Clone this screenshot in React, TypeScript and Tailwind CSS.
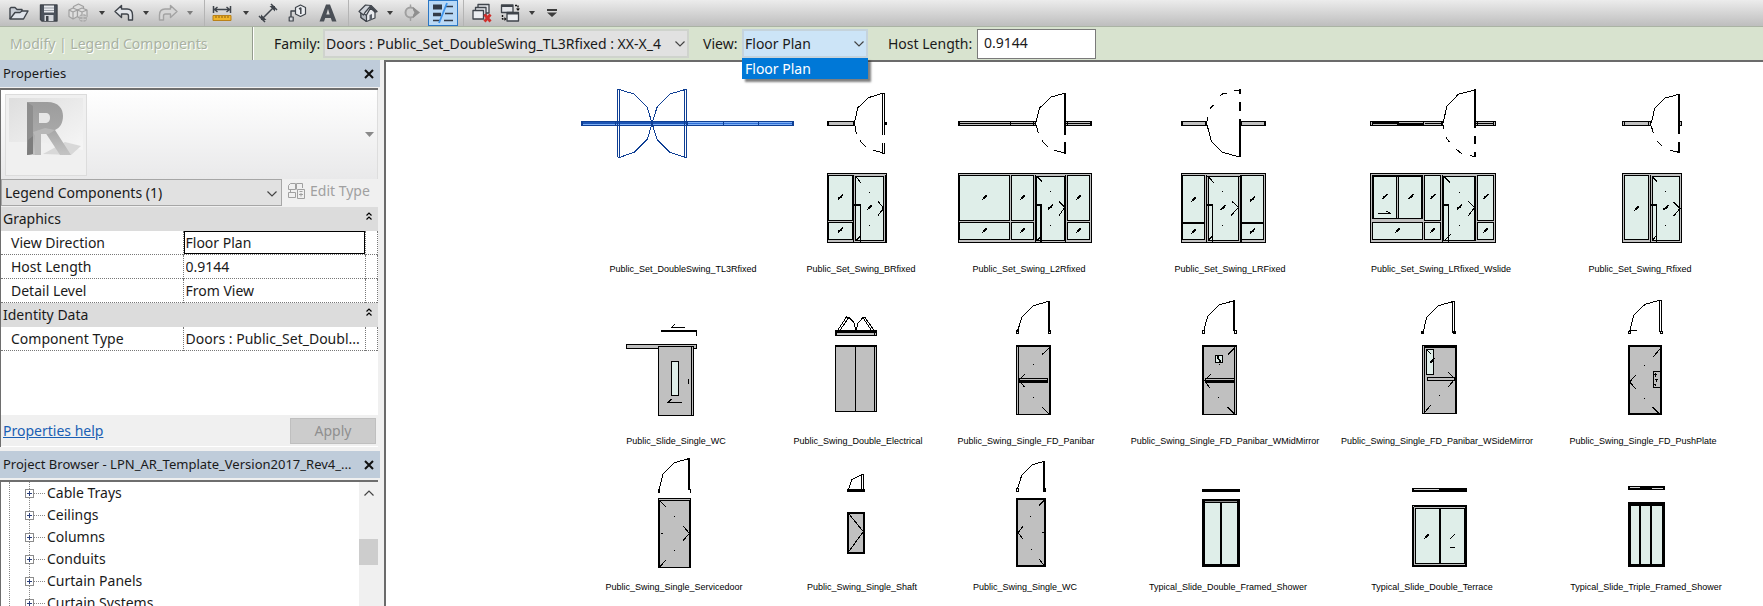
import type { ReactNode } from "react";

const GRAY = "#c0c0c0";
const GLASS = "#dfeee9";

/* ---------- drawing primitives (units are thirds of a pixel) ---------- */

function R({ b, f = "none", w = 3, s = "#000" }: { b: [number, number, number, number]; f?: string; w?: number; s?: string }) {
  const [x1, y1, x2, y2] = b;
  return <rect x={x1 + w / 2} y={y1 + w / 2} width={Math.max(x2 - x1 - w, 0.1)} height={Math.max(y2 - y1 - w, 0.1)} fill={f} stroke={s} strokeWidth={w} />;
}

function P({ d, w = 3, s = "#000" }: { d: string; w?: number; s?: string }) {
  return <path d={d} fill="none" stroke={s} strokeWidth={w} />;
}

function Tick({ x, y }: { x: number; y: number }) {
  return (
    <>
      <P d={`M${x - 7} ${y + 7}L${x + 8} ${y - 8}`} />
      <P d={`M${x - 5} ${y + 4}L${x + 5} ${y - 4}`} w={6} />
    </>
  );
}

function Dots({ x, ys }: { x: number; ys: number[] }) {
  return <>{ys.map((y) => <rect key={y} x={x - 1} y={y - 1} width={3} height={3} />)}</>;
}

/* ---------- legend figures ---------- */

interface FigureSpec {
  name: string;
  cx: number;
  w: number;
  origin: [number, number];
  row: 0 | 1 | 2;
  art: ReactNode;
}

const ROWS = [
  { top: 80, height: 180 },
  { top: 290, height: 142 },
  { top: 454, height: 124 },
];
const SHEET_LEFT = 386;
const SHEET_TOP = 62;
const BLUE = "#0f3f94";

const figures: FigureSpec[] = [
  {
    name: "Public_Set_DoubleSwing_TL3Rfixed", cx: 683, w: 230, origin: [560, 70], row: 0,
    art: (
      <>
        <R b={[64, 153, 701, 167]} f="#7fb0f5" s={BLUE} />
        <P d="M64 160H380" s="#1c55b5" w={6} />
        <P d="M380 160H700" s="#2f6fd6" />
        <R b={[64, 153, 70, 167]} f={BLUE} s={BLUE} />
        <P d="M167 153V167M383 153V167M489 153V167M595 153V167M697 153V167" s={BLUE} />
        <P d="M173 58V262M179 58V262M173 59H180M173 262H180M374 58V262M380 58V262M374 59H381M374 262H381" s={BLUE} />
        <P d="M179 59L222 72L262 112L276 160L262 208L222 247L179 262" s={BLUE} />
        <P d="M374 59L330 72L291 112L276 160L291 208L330 247L374 262" s={BLUE} />
        <P d="M276 150V170" s={BLUE} w={6} />
      </>
    ),
  },
  {
    name: "Public_Set_Swing_BRfixed", cx: 861, w: 140, origin: [560, 70], row: 0,
    art: (
      <>
        <R b={[802, 153, 885, 167]} f={GRAY} />
        <P d="M804 153V167M881 153V167" w={5} />
        <P d="M883 160L893 114L925 83L968 70M885 168L889 192M900 212L917 230M940 241L968 248" />
        <P d="M968 70V194M973 70V194M967 71H975M968 219V250M973 219V250M967 249H975" />
        <R b={[974, 155, 980, 165]} />
        <R b={[801, 309, 981, 519]} f={GRAY} />
        <R b={[804, 315, 880, 452]} f={GLASS} />
        <R b={[804, 456, 880, 510]} f={GLASS} />
        <R b={[885, 317, 971, 513]} f={GLASS} />
        <P d="M881 315V517" w={4} />
        <P d="M975 315V515M885 319H971" />
        <P d="M882 405H901V516" w={4} />
        <Tick x={841} y={382} /><Tick x={841} y={481} /><Tick x={929} y={412} />
        <Dots x={928} ys={[367, 466]} />
        <P d="M954 394L971 414L954 437M889 321L902 338M888 512L901 498" />
        <rect x={967} y={410} width={6} height={12} />
      </>
    ),
  },
  {
    name: "Public_Set_Swing_L2Rfixed", cx: 1029, w: 150, origin: [920, 70], row: 0,
    art: (
      <>
        <R b={[114, 153, 348, 167]} f={GRAY} />
        <P d="M117 160H345M272 153V167M341 153V167" />
        <P d="M117 153V167" w={6} />
        <R b={[436, 153, 516, 167]} f={GRAY} />
        <P d="M438 160H512M442 153V167M510 153V167" />
        <P d="M347 160L358 115L393 81L434 70M349 166L355 190M366 212L383 230M403 241L434 249" />
        <P d="M435 69V194M435 217V251" w={5} />
        <R b={[114, 309, 516, 519]} f={GRAY} />
        <R b={[117, 315, 270, 452]} f={GLASS} />
        <R b={[117, 456, 270, 510]} f={GLASS} />
        <R b={[273, 315, 342, 452]} f={GLASS} />
        <R b={[273, 456, 342, 510]} f={GLASS} />
        <R b={[441, 315, 510, 452]} f={GLASS} />
        <R b={[441, 456, 510, 510]} f={GLASS} />
        <R b={[349, 317, 434, 513]} f={GLASS} />
        <P d="M346 315V517M437 315V517M346 319H437" />
        <P d="M347 405H363V516" w={4} />
        <Tick x={194} y={382} /><Tick x={308} y={382} /><Tick x={476} y={382} />
        <Tick x={194} y={481} /><Tick x={308} y={481} /><Tick x={476} y={481} /><Tick x={391} y={412} />
        <Dots x={391} ys={[364, 466]} />
        <P d="M417 394L434 412L417 437M353 321L366 335M353 510L364 498" />
      </>
    ),
  },
  {
    name: "Public_Set_Swing_LRFixed", cx: 1230, w: 130, origin: [920, 70], row: 0,
    art: (
      <>
        <R b={[783, 153, 861, 167]} f={GRAY} />
        <P d="M785 153V167" w={5} /><P d="M855 153V167" />
        <R b={[961, 153, 1038, 167]} f={GRAY} />
        <P d="M965 153V167M1033 153V167" />
        <P d="M860 160L874 214L907 247L960 261M861 152L864 142M870 116L881 104M900 78L909 71H921M942 62L960 60" />
        <P d="M960 58V71M960 96V122M960 148V262" w={5} />
        <R b={[783, 309, 1038, 519]} f={GRAY} />
        <R b={[786, 315, 855, 459]} f={GLASS} />
        <R b={[786, 459, 855, 510]} f={GLASS} />
        <R b={[964, 315, 1032, 459]} f={GLASS} />
        <R b={[964, 459, 1032, 510]} f={GLASS} />
        <R b={[864, 317, 958, 513]} f={GLASS} />
        <P d="M859 315V517M963 315V517M859 319H963M786 459H855M964 459H1032" w={4} />
        <P d="M860 405H877V516" w={4} />
        <Tick x={821} y={388} /><Tick x={997} y={388} /><Tick x={821} y={484} /><Tick x={997} y={484} /><Tick x={909} y={413} />
        <Dots x={908} ys={[364, 466]} />
        <P d="M936 394L955 412L933 437M866 321L881 338M866 510L880 494" />
      </>
    ),
  },
  {
    name: "Public_Set_Swing_LRfixed_Wslide", cx: 1441, w: 150, origin: [1320, 70], row: 0,
    art: (
      <>
        <R b={[150, 153, 369, 167]} f={GRAY} />
        <P d="M156 158H236M232 163H310" w={6} />
        <P d="M157 153V167M310 153V167M314 160H365M363 153V167" />
        <R b={[466, 153, 528, 167]} f={GRAY} />
        <P d="M468 160H522M473 153V167M521 153V167" />
        <P d="M369 160L381 108L416 72L465 60M369 166L371 176M378 202L388 216M408 237L425 251M450 257L465 260" />
        <P d="M465 57V173M465 198V222M465 246V262" w={6} />
        <R b={[150, 309, 528, 519]} f={GRAY} />
        <R b={[157, 315, 308, 448]} f={GLASS} w={5} />
        <R b={[228, 318, 236, 447]} f={GRAY} />
        <R b={[157, 456, 309, 510]} f={GLASS} />
        <R b={[312, 315, 363, 452]} f={GLASS} />
        <R b={[312, 456, 363, 510]} f={GLASS} />
        <R b={[471, 315, 521, 452]} f={GLASS} />
        <R b={[471, 456, 521, 510]} f={GLASS} />
        <R b={[369, 317, 467, 514]} f={GLASS} w={4} />
        <P d="M368 315V517" w={4} />
        <P d="M371 405H385V516" w={4} />
        <Tick x={194} y={380} /><Tick x={273} y={380} /><Tick x={338} y={380} /><Tick x={497} y={380} />
        <Tick x={233} y={481} /><Tick x={338} y={481} /><Tick x={497} y={481} /><Tick x={418} y={412} />
        <Dots x={418} ys={[367, 466]} />
        <P d="M445 394L464 412L444 438M374 321L390 338M374 512L392 492M174 430H210L198 423" />
      </>
    ),
  },
  {
    name: "Public_Set_Swing_Rfixed", cx: 1640, w: 130, origin: [1320, 70], row: 0,
    art: (
      <>
        <R b={[906, 153, 994, 167]} f={GRAY} />
        <P d="M912 153V167M986 153V167" />
        <R b={[1078, 153, 1086, 167]} f={GRAY} />
        <P d="M994 160L1004 115L1035 84L1077 73M994 168L1000 190M1011 213L1025 227M1050 241L1077 247" />
        <P d="M1077 73V191M1077 215V249" w={6} />
        <R b={[906, 309, 1086, 519]} f={GRAY} />
        <R b={[912, 315, 988, 510]} f={GLASS} />
        <R b={[996, 317, 1080, 513]} f={GLASS} w={4} />
        <P d="M992 315V517" w={4} />
        <P d="M994 405H1009V516" />
        <P d="M994 405H1010" w={4} />
        <Tick x={950} y={415} /><Tick x={1037} y={414} />
        <Dots x={1036} ys={[365, 466]} />
        <P d="M1061 396L1080 415L1061 438M998 321L1011 335M998 510L1008 498M1080 415H1085" />
      </>
    ),
  },
  {
    name: "Public_Slide_Single_WC", cx: 676, w: 110, origin: [580, 285], row: 1,
    art: (
      <>
        <P d="M285 117L274 128H315" />
        <P d="M243 137H349V152" w={5} />
        <R b={[138, 177, 351, 191]} f={GRAY} />
        <R b={[234, 183, 342, 393]} f={GRAY} />
        <P d="M334 185V391M326 282V297" />
        <R b={[273, 228, 297, 333]} f={GLASS} />
        <P d="M275 342L265 352H306" />
      </>
    ),
  },
  {
    name: "Public_Swing_Double_Electrical", cx: 858, w: 80, origin: [580, 285], row: 1,
    art: (
      <>
        <P d="M773 136L800 95L806 98L779 137M806 97L822 113L828 136L834 115L850 96M847 95L875 137M853 95L883 137" />
        <R b={[765, 138, 891, 153]} f={GRAY} />
        <P d="M765 139H890" w={7} /><P d="M768 136V153M884 138V152" w={4} />
        <R b={[765, 180, 891, 381]} f={GRAY} w={4} />
        <P d="M827 184V378M884 184V378M768 184H888M766 378H889" />
      </>
    ),
  },
  {
    name: "Public_Swing_Single_FD_Panibar", cx: 1026, w: 80, origin: [580, 285], row: 1,
    art: (
      <>
        <P d="M1312 140L1326 97L1360 62L1406 49" />
        <P d="M1407 48V140" w={6} />
        <R b={[1308, 136, 1317, 147]} /><R b={[1404, 136, 1413, 147]} />
        <R b={[1308, 180, 1413, 390]} f={GRAY} />
        <P d="M1315 184V388" /><P d="M1410 181V388M1312 183H1412" w={5} />
        <R b={[1316, 279, 1404, 292]} f={GRAY} /><P d="M1317 289H1404" w={7} />
        <P d="M1334 267L1317 286L1334 307M1386 209L1406 190M1386 366L1408 388" />
        <Dots x={1360} ys={[238, 337]} />
      </>
    ),
  },
  {
    name: "Public_Swing_Single_FD_Panibar_WMidMirror", cx: 1225, w: 80, origin: [1060, 285], row: 1,
    art: (
      <>
        <P d="M431 138L443 94L478 59L520 48" />
        <P d="M522 45V138" w={5} />
        <R b={[426, 135, 435, 147]} /><R b={[522, 135, 531, 147]} />
        <R b={[426, 180, 531, 390]} f={GRAY} />
        <P d="M429 180V390M426 183H530" w={5} /><P d="M523 184V388" />
        <R b={[465, 210, 489, 234]} f={GLASS} /><P d="M472 218L482 227M472 216H477M477 228H483" w={4} />
        <P d="M434 281H523" /><P d="M434 289H523" w={7} />
        <P d="M452 268L434 287L449 308M504 209L524 188M502 366L524 388" />
        <Dots x={478} ys={[238]} /><Dots x={475} ys={[337]} />
      </>
    ),
  },
  {
    name: "Public_Swing_Single_FD_Panibar_WSideMirror", cx: 1437, w: 80, origin: [1400, 285], row: 1,
    art: (
      <>
        <P d="M70 140L80 97L115 62L158 50" />
        <R b={[156, 48, 165, 144]} />
        <R b={[63, 138, 71, 147]} w={4} /><R b={[160, 138, 168, 147]} w={4} />
        <R b={[66, 180, 171, 387]} f={GRAY} />
        <P d="M73 187V384" /><P d="M167 181V386M72 184H170" w={7} />
        <R b={[78, 192, 102, 270]} f={GLASS} />
        <P d="M80 194L93 207" /><Tick x={97} y={227} />
        <R b={[81, 276, 165, 288]} f={GRAY} w={4} />
        <P d="M144 261L165 282L145 305M74 382L93 360" />
        <Dots x={118} ys={[330]} />
      </>
    ),
  },
  {
    name: "Public_Swing_Single_FD_PushPlate", cx: 1643, w: 80, origin: [1400, 285], row: 1,
    art: (
      <>
        <P d="M689 138L701 91L735 58L778 46M690 136H711" />
        <R b={[777, 45, 786, 141]} />
        <R b={[684, 138, 692, 147]} /><R b={[780, 138, 789, 147]} />
        <R b={[684, 180, 786, 390]} f={GRAY} w={5} />
        <P d="M707 270L689 291L708 312M760 215L780 192M758 366L779 387" />
        <R b={[759, 258, 784, 309]} f={GRAY} />
        <P d="M766 264V276M763 268H770M768 282V292M764 284H774M766 296V302M763 298H768" />
        <Dots x={733} ys={[241, 340]} />
      </>
    ),
  },
  {
    name: "Public_Swing_Single_Servicedoor", cx: 674, w: 80, origin: [580, 285], row: 2,
    art: (
      <>
        <P d="M237 614L249 568L283 533L326 521" />
        <P d="M327 519V614M237 613V623M331 613V623" w={5} />
        <R b={[234, 639, 333, 849]} f={GRAY} />
        <P d="M237 645V848M330 645V848" w={5} /><P d="M235 646H332" />
        <P d="M239 648L257 665M239 846L257 826M310 724L328 745L309 767M242 745H249" />
        <Dots x={283} ys={[694, 796]} />
      </>
    ),
  },
  {
    name: "Public_Swing_Single_Shaft", cx: 862, w: 60, origin: [580, 285], row: 2,
    art: (
      <>
        <P d="M806 612L816 583L845 569" /><R b={[844, 567, 853, 616]} />
        <P d="M801 616H855" w={8} />
        <R b={[801, 681, 855, 807]} f={GRAY} w={5} />
        <P d="M806 686L850 740L806 800" />
      </>
    ),
  },
  {
    name: "Public_Swing_Single_WC", cx: 1025, w: 80, origin: [580, 285], row: 2,
    art: (
      <>
        <P d="M1312 613L1325 571L1357 539L1390 530" />
        <P d="M1392 528V614" w={5} />
        <R b={[1308, 610, 1317, 621]} /><R b={[1390, 610, 1398, 621]} w={4} />
        <R b={[1308, 639, 1398, 846]} f={GRAY} w={5} />
        <P d="M1377 662L1393 645M1377 822L1393 842M1329 724L1314 743L1329 762M1387 742H1394" />
        <Dots x={1351} ys={[694]} /><Dots x={1354} ys={[793]} />
      </>
    ),
  },
  {
    name: "Typical_Slide_Double_Framed_Shower", cx: 1228, w: 80, origin: [1060, 285], row: 2,
    art: (
      <>
        <P d="M426 616H540" w={9} />
        <R b={[426, 642, 540, 846]} f={GLASS} w={9} />
        <P d="M483 645V842" w={6} /><P d="M434 650H531" s="#8a8a8a" /><P d="M434 653H531" />
      </>
    ),
  },
  {
    name: "Typical_Slide_Double_Terrace", cx: 1432, w: 80, origin: [1400, 285], row: 2,
    art: (
      <>
        <P d="M36 615H201" w={12} /><P d="M42 614H117" s="#d8d8d8" />
        <R b={[36, 660, 201, 846]} f={GRAY} w={4} />
        <R b={[45, 669, 119, 837]} f={GLASS} /><R b={[121, 669, 196, 837]} f={GLASS} />
        <P d="M197 662V845M37 843H200" w={7} />
        <P d="M42 663H198M40 665V840" />
        <Tick x={80} y={754} /><P d="M151 761L165 748M150 787H165" />
      </>
    ),
  },
  {
    name: "Typical_Slide_Triple_Framed_Shower", cx: 1646, w: 80, origin: [1400, 285], row: 2,
    art: (
      <>
        <P d="M684 609H795" w={12} /><P d="M690 608H720M756 610H790" s="#d8d8d8" />
        <R b={[684, 652, 795, 846]} f={GLASS} w={8} />
        <P d="M684 657H795" w={12} /><P d="M720 655V842M753 655V842" w={5} />
      </>
    ),
  },
];

function LegendFigure({ name, cx, w, origin, row, art }: FigureSpec) {
  const { top, height } = ROWS[row];
  const left = cx - w / 2;
  return (
    <figure className="absolute flex flex-col items-center" style={{ left: left - SHEET_LEFT, top: top - SHEET_TOP, width: w }}>
      <svg width={w} height={height} viewBox={`${(left - origin[0]) * 3} ${(top - origin[1]) * 3} ${w * 3} ${height * 3}`} shapeRendering="crispEdges" aria-hidden="true">
        {art}
      </svg>
      <figcaption className="pt-px font-['Liberation_Sans',Arial,sans-serif] text-[9px] leading-4 whitespace-nowrap text-black">{name}</figcaption>
    </figure>
  );
}

/* ---------- toolbar ---------- */

function Tool({ label, className = "w-6", children }: { label: string; className?: string; children: ReactNode }) {
  return (
    <button type="button" aria-label={label} className={`flex h-full shrink-0 items-center justify-center pb-px ${className}`}>
      {children}
    </button>
  );
}

function Icon({ children }: { children: ReactNode }) {
  return (
    <svg width="20" height="20" viewBox="0 0 20 20" fill="none" stroke="#3f444b" strokeWidth="1.4" strokeLinejoin="round" aria-hidden="true">
      {children}
    </svg>
  );
}

function Caret({ label, dim = false, className = "w-5" }: { label: string; dim?: boolean; className?: string }) {
  return (
    <Tool label={label} className={className}>
      <svg width="6" height="4" viewBox="0 0 6 4" fill={dim ? "#7c7c7c" : "#3c3c3c"} aria-hidden="true"><path d="M0 0H6L3 4Z" /></svg>
    </Tool>
  );
}

function Divider({ className }: { className: string }) {
  return (
    <span className={`flex h-full shrink-0 justify-center ${className}`}>
      <span className="w-px bg-[#b4b4b4]" />
    </span>
  );
}

function Toolbar() {
  return (
    <header className="flex h-[27px] shrink-0 items-center border-b border-[#aab3a4] bg-linear-to-b from-[#ececec] to-[#bebebe] pl-1">
      <Tool label="Open" className="w-[30px]">
        <Icon>
          <path d="M1 16V5.500L2 4.500H6L8 6.500H13V9" fill="#c9ced6" />
          <path d="M1 16L6 9.500H11L13 8H19L14.500 16Z" fill="#dfe3ea" />
        </Icon>
      </Tool>
      <Tool label="Save" className="w-[30px]">
        <Icon>
          <path d="M1.500 2H18V18H3L1.500 16.500Z" fill="#4b525c" />
          <rect x="5" y="2.500" width="10" height="7" fill="#e8eaee" stroke="none" />
          <path d="M5 5H15M5 7.500H15" stroke="#9aa0a8" strokeWidth="1" />
          <rect x="5.500" y="12" width="9" height="6" fill="#d5d8dd" stroke="none" />
          <rect x="7" y="13" width="2.500" height="5" fill="#3f444b" stroke="none" />
        </Icon>
      </Tool>
      <Tool label="Synchronize" className="w-7">
        <Icon>
          <g stroke="#a0a0a0" strokeWidth="1.200" fill="#dedede">
            <path d="M5.500 3.500L10.500 1L15.500 3.500V9L10.500 11.500L5.500 9Z" />
            <path d="M1 7L5 5L9.500 7V13.500L5 16L1 13.500Z" />
            <path d="M9.500 7L14 5L19 7V13.500L14 17L9.500 13.500Z" />
            <path d="M1 7L5 9L9.500 7L14 9L19 7M5 9V16M14 9V16" fill="none" />
          </g>
          <circle cx="15" cy="15" r="4" fill="#adadad" stroke="none" />
          <path d="M11.500 13.500H18.500M12 16.500H18M15 11V19" stroke="#c8c8c8" strokeWidth="1" />
        </Icon>
      </Tool>
      <Caret label="Synchronize options" />
      <Tool label="Undo">
        <Icon><path d="M1 8.500L7.500 2.500V6H13C17 6 18.500 9 18.500 12V17H14.500V13C14.500 11.500 14 11 12.500 11H7.500V14.500Z" fill="#e2e5ea" /></Icon>
      </Tool>
      <Caret label="Undo history" />
      <Tool label="Redo">
        <Icon><path d="M19 8.500L12.500 2.500V6H7C3 6 1.500 9 1.500 12V17H5.500V13C5.500 11.500 6 11 7.500 11H12.500V14.500Z" fill="#d6d6d6" stroke="#a3a3a3" /></Icon>
      </Tool>
      <Caret label="Redo history" dim />
      <Divider className="w-2" />
      <Tool label="Measure" className="w-7">
        <Icon>
          <path d="M1.500 3V10M18.500 3V10M2 6.500H18M5.500 4L2.500 6.500L5.500 9M14.500 4L17.500 6.500L14.500 9" strokeWidth="1.500" />
          <rect x="1" y="12.500" width="18" height="5" fill="#f0b429" stroke="#b9811a" strokeWidth="1" />
          <path d="M4 13V15M7 13V15M10 13V15M13 13V15M16 13V15" stroke="#8a5f10" strokeWidth="1" />
        </Icon>
      </Tool>
      <Caret label="Measure options" />
      <Tool label="Aligned Dimension">
        <Icon>
          <path d="M4 16L16 4M1 13L7 19M13 1L19 7" strokeWidth="1.500" />
          <path d="M3 17V11.500L8.500 17Z M17 3V8.500L11.500 3Z" fill="#3f444b" stroke="none" />
        </Icon>
      </Tool>
      <Tool label="Tag by Category" className="w-9">
        <Icon>
          <path d="M12.500 2L17.500 4.500V11L12.500 13.500L7.500 11V4.500Z" fill="#eceef1" strokeWidth="1.200" />
          <path d="M11 6L12.800 5V11" strokeWidth="1.500" />
          <path d="M7.500 8H3V14" strokeWidth="1.400" />
          <rect x="1.200" y="14" width="4" height="4" fill="#d5d8dd" strokeWidth="1.200" />
        </Icon>
      </Tool>
      <Tool label="Text">
        <Icon><path d="M1.500 18.500L8 1.500H12L18.500 18.500H14L12.800 15H7.200L6 18.500ZM8.300 11.500H11.700L10 6Z" fill="#4a4f56" fillRule="evenodd" stroke="none" /></Icon>
      </Tool>
      <Divider className="w-4" />
      <Tool label="Default 3D View">
        <Icon>
          <path d="M3 8.500V14.500L8.500 18.500L17 15V8L13 4Z" fill="#e8eaee" strokeWidth="1.200" />
          <path d="M3 8.500L8.500 12.500V18.500L3 14.500Z" fill="#b4b9c1" strokeWidth="1.200" />
          <path d="M1 8.500L7.500 2L13 2.500L7 9.500L5.500 12Z" fill="#d0d4da" strokeWidth="1.200" />
          <path d="M13 2.500L19 8.500L17 9L12.500 5L8.500 12" strokeWidth="1.400" />
          <path d="M11.500 17.500V12L14 11V16.500Z" fill="#5a616b" stroke="none" />
        </Icon>
      </Tool>
      <Caret label="3D View options" />
      <Tool label="Section">
        <Icon>
          <circle cx="8.500" cy="9.500" r="5" fill="#cfcfcf" stroke="#a0a0a0" strokeWidth="2" />
          <path d="M11 4L18 9.500L11 15V12L12.500 9.500L11 7Z" fill="#8f8f8f" stroke="none" />
          <path d="M8.500 1.500V4M8.500 15V18" stroke="#a0a0a0" />
        </Icon>
      </Tool>
      <button type="button" aria-label="Thin Lines" aria-pressed="true" className="ml-1 flex h-[26px] w-[30px] shrink-0 items-center justify-center border border-[#2a76c4] bg-[#b9d9f6]">
        <svg width="22" height="22" viewBox="0 0 22 22" fill="none" stroke="#333b47" aria-hidden="true">
          <path d="M1 5H10" strokeWidth="5" />
          <path d="M1 12.500H9" strokeWidth="3.500" />
          <path d="M1 18.500H8M14 4.500H21M13 11.500H21M12 18.500H21" strokeWidth="1.600" />
          <path d="M15 1L7 21" stroke="#3f94ea" strokeWidth="1.800" />
        </svg>
      </button>
      <Divider className="w-[10px]" />
      <Tool label="Close Hidden Windows" className="w-7">
        <Icon>
          <path d="M6 1.500H17V10H6Z" fill="#e4e6ea" strokeWidth="1.300" />
          <path d="M3.500 4.500H14V12H3.500Z" fill="#e4e6ea" strokeWidth="1.300" />
          <path d="M1 7.500H11.500V16H1Z" fill="#eceef1" strokeWidth="1.300" />
          <path d="M12.500 11.500L18.500 18.500M18.500 11.500L12.500 18.500" stroke="#cf2f2b" strokeWidth="2.800" />
        </Icon>
      </Tool>
      <Tool label="Switch Windows" className="w-7">
        <Icon>
          <path d="M1.500 2H13V9.500H1.500Z" fill="#e4e6ea" strokeWidth="1.300" />
          <path d="M1.500 3H13" strokeWidth="2" />
          <path d="M7 9.500H18.500V18H7Z" fill="#eceef1" strokeWidth="1.300" />
          <path d="M7 10.500H18.500" strokeWidth="2" />
          <path d="M15 2.500H18V7M2.500 12V16H5" strokeDasharray="2 1" stroke="#111" />
          <path d="M16 5.500H20L18 8Z M4.500 14V18L6.500 16Z" fill="#111" stroke="none" />
        </Icon>
      </Tool>
      <Caret label="Window options" className="w-4" />
      <Tool label="Customize Quick Access Toolbar">
        <svg width="10" height="8" viewBox="0 0 10 8" fill="#3c3c3c" aria-hidden="true"><path d="M0 0H10V2H0ZM0 3.500H10L5 8Z" /></svg>
      </Tool>
    </header>
  );
}

/* ---------- options bar ---------- */

function Chevron({ className = "", up = false }: { className?: string; up?: boolean }) {
  return (
    <svg width="10" height="6" viewBox="0 0 10 6" fill="none" stroke="#444" strokeWidth="1.200" className={className} aria-hidden="true">
      <path d={up ? "M.5 5.500L5 1L9.500 5.500" : "M.5 .5L5 5L9.500 .5"} />
    </svg>
  );
}

function OptionsBar() {
  return (
    <div className="flex h-[33px] shrink-0 items-center bg-[#d8e3cf] text-sm">
      <span className="w-[252px] shrink-0 pl-[10px] text-[#a9b1a3] [text-shadow:1px_1px_0_#fff]">Modify | Legend Components</span>
      <span className="h-full w-[2px] shrink-0 border-l border-[#949c8e] bg-white" />
      <label htmlFor="family" className="ml-5 w-[49px] shrink-0">Family:</label>
      <div className="relative w-[366px] shrink-0">
        <select id="family" className="block h-[29px] w-full appearance-none border-2 border-[#cfd3cd] bg-[#e1e1e1] pr-5 pl-px outline-none">
          <option>Doors : Public_Set_DoubleSwing_TL3Rfixed : XX-X_4</option>
        </select>
        <Chevron className="pointer-events-none absolute top-3 right-1" />
      </div>
      <label htmlFor="view" className="ml-[14px] w-[39px] shrink-0">View:</label>
      <div className="relative w-[126px] shrink-0">
        <select id="view" className="block h-[29px] w-full appearance-none border-2 border-[#c5d3dc] bg-[#cce4f7] pr-5 pl-px outline-none">
          <option>Floor Plan</option>
        </select>
        <Chevron className="pointer-events-none absolute top-3 right-1" />
        <ul role="listbox" aria-label="View" className="absolute top-full left-0 z-10 w-full bg-[#0078d7] text-white shadow-[3px_3px_2px_rgba(0,0,0,0.5)]">
          <li role="option" aria-selected="true" className="h-[21px] pl-[3px] leading-[22px]">Floor Plan</li>
        </ul>
      </div>
      <label htmlFor="host" className="ml-5 w-[89px] shrink-0 whitespace-nowrap">Host Length:</label>
      <input id="host" defaultValue="0.9144" className="h-[30px] w-[119px] shrink-0 border border-[#7a7a7a] bg-white pb-[2px] pl-[6px] outline-none" />
    </div>
  );
}

/* ---------- side panels ---------- */

function PanelTitle({ title }: { title: string }) {
  return (
    <div className="flex h-[27px] shrink-0 items-center justify-between bg-[#bfccda] pr-[6px] pl-[3px]">
      <h2 className="min-w-0 text-[13px] whitespace-nowrap">{title}</h2>
      <button type="button" aria-label={`Close ${title}`} className="shrink-0">
        <svg width="10" height="10" viewBox="0 0 10 10" stroke="#111" strokeWidth="2" aria-hidden="true"><path d="M1 1L9 9M9 1L1 9" /></svg>
      </button>
    </div>
  );
}

function GroupRow({ name }: { name: string }) {
  return (
    <tr className="bg-[#dcdcdc]">
      <th scope="colgroup" colSpan={3} className="p-0 font-normal">
        <div className="flex h-6 items-center justify-between pr-[6px] pl-[2px]">
          {name}
          <button type="button" aria-label={`Collapse ${name}`} className="pb-[6px]">
            <svg width="6" height="8" viewBox="0 0 6 8" fill="none" stroke="#000" strokeWidth="1.200" aria-hidden="true"><path d="M.5 3.500L3 1L5.500 3.500M.5 7.500L3 5L5.500 7.500" /></svg>
          </button>
        </div>
      </th>
    </tr>
  );
}

function PropRow({ name, value, active = false }: { name: string; value: string; active?: boolean }) {
  return (
    <tr className="border-b border-dotted border-[#777]">
      <th scope="row" className="border-r border-dotted border-[#777] p-0 pl-[10px] text-left font-normal">{name}</th>
      <td className="border-r border-dotted border-[#777] p-0">
        <input
          aria-label={name}
          defaultValue={value}
          className={active ? "block h-[23px] w-full border border-black bg-white pl-px outline-none" : "block h-[23px] w-full bg-white pl-[2px] outline-none"}
        />
      </td>
      <td className="border-r border-dotted border-[#777] p-0" />
    </tr>
  );
}

function PropertiesPanel() {
  return (
    <section className="flex shrink-0 flex-col">
      <PanelTitle title="Properties" />
      <div className="mt-px mr-[2px] border-t-2 border-l border-[#6e6e6e] bg-white">
        <div className="flex h-[89px] items-center justify-between border-r border-[#ddd] bg-linear-to-b from-white to-[#e9e9ea] pr-[3px] pl-1">
          <div className="flex size-[82px] items-start justify-center border border-[#dcdcdc] bg-[#f0f0f0] p-[3px]">
            <svg width="74" height="74" viewBox="0 0 74 74" aria-hidden="true">
              <defs>
                <linearGradient id="wall" x1="0" x2="1" y1="0" y2="1"><stop offset="0" stopColor="#dedede" /><stop offset="1" stopColor="#f6f6f6" /></linearGradient>
                <linearGradient id="face" x1="0" x2="0" y1="0" y2="1"><stop offset="0" stopColor="#9c9c9c" /><stop offset=".55" stopColor="#a8a8a8" /><stop offset="1" stopColor="#c4c4c4" /></linearGradient>
              </defs>
              <path d="M0 0H74V52L30 44H0Z" fill="url(#wall)" />
              <path d="M34 56L56 44L72 48L62 57Z" fill="#d8d8d8" />
              <path d="M18 4L26 6V56L18 57Z" fill="#8e8e8e" />
              <path d="M18 4H38C50 4 54 11 54 18C54 25 51 30 46 32L62 57H51L36 34L30 35V57H24V8Z" fill="url(#face)" />
              <path d="M30 15H36C40 15 41 17 41 20C41 23 39 25 36 25H30Z" fill="#e6e6e6" />
              <path d="M24 34L36 30L46 32L40 36L32 36V57H26V38Z" fill="#b8b8b8" />
              <path d="M18 57L24 56V38L19 42Z" fill="#7d7d7d" />
            </svg>
          </div>
          <svg width="9" height="5" viewBox="0 0 9 5" fill="#8a8a8a" aria-hidden="true"><path d="M0 0H9L4.500 5Z" /></svg>
        </div>
        <div className="flex h-7 items-start bg-[#f0f0f0]">
          <div className="relative w-[281px]">
            <select aria-label="Selection filter" className="block h-[27px] w-full appearance-none border border-[#a6a6a6] bg-[#e1e1e1] pr-5 pl-[3px] outline-none">
              <option>Legend Components (1)</option>
            </select>
            <Chevron className="pointer-events-none absolute top-3 right-[5px]" />
          </div>
          <button type="button" disabled className="ml-[6px] flex h-6 items-center gap-[5px] whitespace-nowrap text-[#a0a0a0]">
            <svg width="17" height="16" viewBox="0 0 17 16" fill="none" stroke="#a0a0a0" strokeWidth="1" aria-hidden="true">
              <path d="M.5 2.500L2.500 .5H7.500V6.500H.5ZM8.500 .5H14.500V5M.5 9.500H7.500V14.500H.5ZM8.500 6.500V.5M2.500 6.500V9.500" />
              <path d="M9.500 6.500H16.500V15.500H9.500ZM11.500 8.500H14.500M11 11.500H15M13 13.500V10" />
            </svg>
            Edit Type
          </button>
        </div>
        <table className="w-full table-fixed border-collapse">
          <colgroup>
            <col className="w-[182px]" />
            <col />
            <col className="w-3" />
          </colgroup>
          <tbody>
            <GroupRow name="Graphics" />
            <PropRow name="View Direction" value="Floor Plan" active />
            <PropRow name="Host Length" value="0.9144" />
            <PropRow name="Detail Level" value="From View" />
            <GroupRow name="Identity Data" />
            <PropRow name="Component Type" value="Doors : Public_Set_Doubl..." />
          </tbody>
        </table>
        <div className="h-16" />
        <div className="flex h-8 items-center justify-between border-b border-white bg-[#f0f0f0] pr-[2px] pl-[2px]">
          <a href="#help" className="text-[#1a5fb4] underline">Properties help</a>
          <button type="button" disabled className="h-[26px] w-[86px] border border-[#bfbfbf] bg-[#cccccc] text-[#8f8f8f]">Apply</button>
        </div>
      </div>
    </section>
  );
}

const categories = ["Cable Trays", "Ceilings", "Columns", "Conduits", "Curtain Panels", "Curtain Systems"];

function ProjectBrowser() {
  return (
    <section className="mt-1 flex min-h-0 flex-1 flex-col">
      <PanelTitle title="Project Browser - LPN_AR_Template_Version2017_Rev4_..." />
      <div className="mt-[2px] mr-[2px] flex min-h-0 flex-1 overflow-hidden border-t-2 border-l border-[#6e6e6e] bg-white">
        <div className="ml-2 min-w-0 flex-1 overflow-hidden border-l border-dotted border-[#888]">
          <ul role="tree" aria-label="Project Browser">
            {categories.map((name) => (
              <li key={name} role="treeitem" aria-expanded="false" className="flex h-[22px] items-center">
                <svg width="37" height="22" viewBox="0 0 37 22" fill="none" shapeRendering="crispEdges" aria-hidden="true">
                  <path d="M19.500 0V22M24 11.500H35" stroke="#888" strokeDasharray="1 1" />
                  <rect x="15.500" y="7.500" width="8" height="8" fill="#fff" stroke="#8c8c8c" />
                  <path d="M17 11.500H22M19.500 9V14" stroke="#2b3f7a" />
                </svg>
                {name}
              </li>
            ))}
          </ul>
        </div>
        <div className="flex w-[19px] shrink-0 flex-col items-center bg-[#f0f0f0]">
          <Chevron up className="mt-2" />
          <span className="mt-[43px] h-[26px] w-full bg-[#cdcdcd]" />
        </div>
      </div>
    </section>
  );
}

export default function App() {
  return (
    <div className="flex h-screen flex-col overflow-hidden bg-[#f0f0f0] font-['Noto_Sans','Segoe_UI',sans-serif] text-sm text-[#1a1a1a]">
      <Toolbar />
      <OptionsBar />
      <div className="flex min-h-0 flex-1">
        <aside className="flex w-[380px] shrink-0 flex-col">
          <PropertiesPanel />
          <ProjectBrowser />
        </aside>
        <main className="relative ml-1 flex-1 overflow-hidden border-t-2 border-l-2 border-[#6b6b6b] bg-white">
          {figures.map((figure) => (
            <LegendFigure key={figure.name} {...figure} />
          ))}
        </main>
      </div>
    </div>
  );
}
